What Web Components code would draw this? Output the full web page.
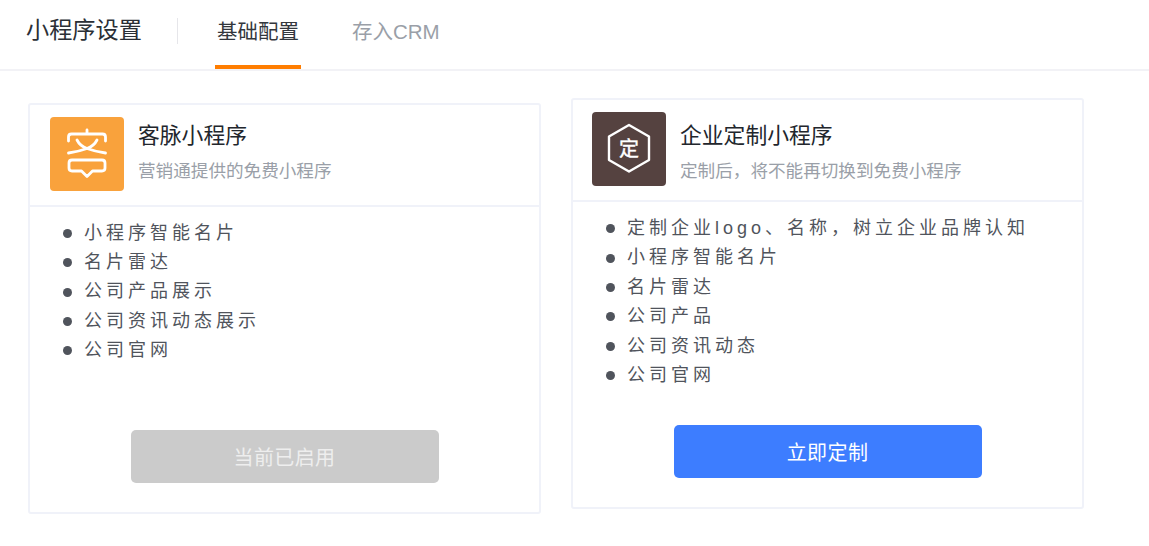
<!DOCTYPE html>
<html lang="zh">
<head>
<meta charset="utf-8">
<title>小程序设置</title>
<style>
  html, body { margin: 0; background: #fff; }
  body { font-family: "Liberation Sans", "Noto Sans CJK SC", sans-serif; width: 1149px; height: 546px; overflow: hidden; }
  .cards { display: flex; align-items: flex-start; gap: 30px; padding: 27px 0 0 28px; }
  .cards > :first-child { margin-top: 4.5px; }
</style>
</head>
<body>
<app-header heading="小程序设置">
  <app-tab active>基础配置</app-tab>
  <app-tab>存入CRM</app-tab>
</app-header>
<div class="cards">
  <plan-card heading="客脉小程序" sub="营销通提供的免费小程序" button="当前已启用" disabled style="--text-offset: -3px">
    <svg slot="icon" viewBox="0 0 74 74" width="74" height="74">
      <rect width="74" height="74" rx="4" fill="#f9a23c"/>
      <g fill="none" stroke="#fff" stroke-width="2.8" stroke-linecap="round" stroke-linejoin="round">
        <path d="M37 13v3.500M18.500 24v-4q0-3 3-3h31q3 0 3 3v4"/>
        <path d="M27 23q3 6 10 8.500q8 3 18.500 4.500M47 23q-3 6-10 8.500q-8 3-18.500 4.500"/>
        <path d="M22 43h30q3 0 3 3v5q0 3-3 3H42.500L37 59.500 31.500 54H22q-3 0-3-3v-5q0-3 3-3z"/>
      </g>
    </svg>
    <plan-item>小程序智能名片</plan-item>
    <plan-item>名片雷达</plan-item>
    <plan-item>公司产品展示</plan-item>
    <plan-item>公司资讯动态展示</plan-item>
    <plan-item>公司官网</plan-item>
  </plan-card>
  <plan-card heading="企业定制小程序" sub="定制后，将不能再切换到免费小程序" button="立即定制" style="--text-offset: 6px; --icon-left: 19px">
    <svg slot="icon" viewBox="0 0 74 74" width="74" height="74">
      <rect width="74" height="74" rx="4" fill="#554240"/>
      <path d="M37 13 57 24.500v23.500L37 59.500 17 48V24.500z" fill="none" stroke="#fff" stroke-width="2.400" stroke-linejoin="round"/>
      <text x="37" y="43.500" text-anchor="middle" font-size="20" fill="#fff" stroke="#fff" stroke-width="0.400" font-family="Noto Sans CJK SC, sans-serif">定</text>
    </svg>
    <plan-item>定制企业logo、名称，树立企业品牌认知</plan-item>
    <plan-item>小程序智能名片</plan-item>
    <plan-item>名片雷达</plan-item>
    <plan-item>公司产品</plan-item>
    <plan-item>公司资讯动态</plan-item>
    <plan-item>公司官网</plan-item>
  </plan-card>
</div>
<script>
class AppHeader extends HTMLElement {
  constructor() {
    super();
    const shadow = this.attachShadow({ mode: "open" });
    shadow.innerHTML = `
<style>
  :host {
    display: flex;
    align-items: stretch;
    height: 69px;
    border-bottom: 2px solid #f2f2f6;
    padding-left: 26px;
  }
  #title {
    font-size: 23.200px;
    line-height: 60px;
    color: #2b2f36;
    padding-right: 35px;
  }
  #divider {
    width: 1px;
    height: 26px;
    margin-top: 18px;
    background: #e6e6ea;
  }
  #tabs {
    display: flex;
    gap: 49px;
    margin-left: 37px;
  }
</style>
<div id="title"></div>
<div id="divider"></div>
<div id="tabs"><slot></slot></div>`;
    shadow.getElementById("title").textContent = this.getAttribute("heading");
  }
}

class AppTab extends HTMLElement {
  constructor() {
    super();
    this.attachShadow({ mode: "open" }).innerHTML = `
<style>
  :host {
    display: block;
    height: 69px;
    box-sizing: border-box;
    padding: 0 2px;
    font-size: 20.500px;
    line-height: 63px;
    color: #9a9fa8;
  }
  :host([active]) {
    color: #33373d;
    border-bottom: 4px solid #ff7d00;
  }
</style>
<slot></slot>`;
  }
}

class PlanCard extends HTMLElement {
  constructor() {
    super();
    const shadow = this.attachShadow({ mode: "open" });
    shadow.innerHTML = `
<style>
  :host {
    display: flex;
    flex-direction: column;
    width: 513px;
    height: 411px;
    box-sizing: border-box;
    border: 2px solid #f0f2f9;
    border-radius: 3px;
  }
  #head {
    display: flex;
    align-items: center;
    gap: 14px;
    height: 102px;
    box-sizing: border-box;
    padding: 0 0 2px var(--icon-left, 20px);
    border-bottom: 2px solid #f0f2f9;
    flex: none;
  }
  ::slotted(svg) { display: block; }
  #icon { height: 74px; }
  #text { margin-top: var(--text-offset, 0); }
  #heading {
    font-size: 21.800px;
    line-height: 30px;
    color: #22262c;
  }
  #sub {
    font-size: 17.600px;
    line-height: 26px;
    margin-top: 7px;
    color: #9a9fa8;
  }
  #list {
    padding: 12px 0 0 33px;
    flex: 1;
  }
  #foot {
    display: flex;
    justify-content: center;
    padding-bottom: 29px;
  }
  #btn {
    width: 308px;
    height: 53px;
    border: 0;
    padding: 0;
    border-radius: 5px;
    background: #3d7dff;
    color: #fff;
    font: inherit;
    font-size: 20px;
    letter-spacing: 0.400px;
  }
  :host([disabled]) #btn { background: #cbcbcb; color: #eeeeee; }
</style>
<div id="head">
  <div id="icon"><slot name="icon"></slot></div>
  <div id="text">
    <div id="heading"></div>
    <div id="sub"></div>
  </div>
</div>
<div id="list"><slot></slot></div>
<div id="foot"><button id="btn"></button></div>`;
    shadow.getElementById("heading").textContent = this.getAttribute("heading");
    shadow.getElementById("sub").textContent = this.getAttribute("sub");
    shadow.getElementById("btn").textContent = this.getAttribute("button");
  }
}

class PlanItem extends HTMLElement {
  constructor() {
    super();
    this.attachShadow({ mode: "open" }).innerHTML = `
<style>
  :host {
    display: flex;
    align-items: center;
    white-space: nowrap;
    color: #50545c;
    font-size: 18px;
    letter-spacing: 4px;
    line-height: 29.400px;
  }
  #dot {
    width: 9px;
    height: 9px;
    border-radius: 50%;
    background: #50545c;
    margin-right: 12px;
    flex: none;
  }
</style>
<div id="dot"></div>
<slot></slot>`;
  }
}

customElements.define("app-tab", AppTab);
customElements.define("app-header", AppHeader);
customElements.define("plan-card", PlanCard);
customElements.define("plan-item", PlanItem);
</script>
</body>
</html>
